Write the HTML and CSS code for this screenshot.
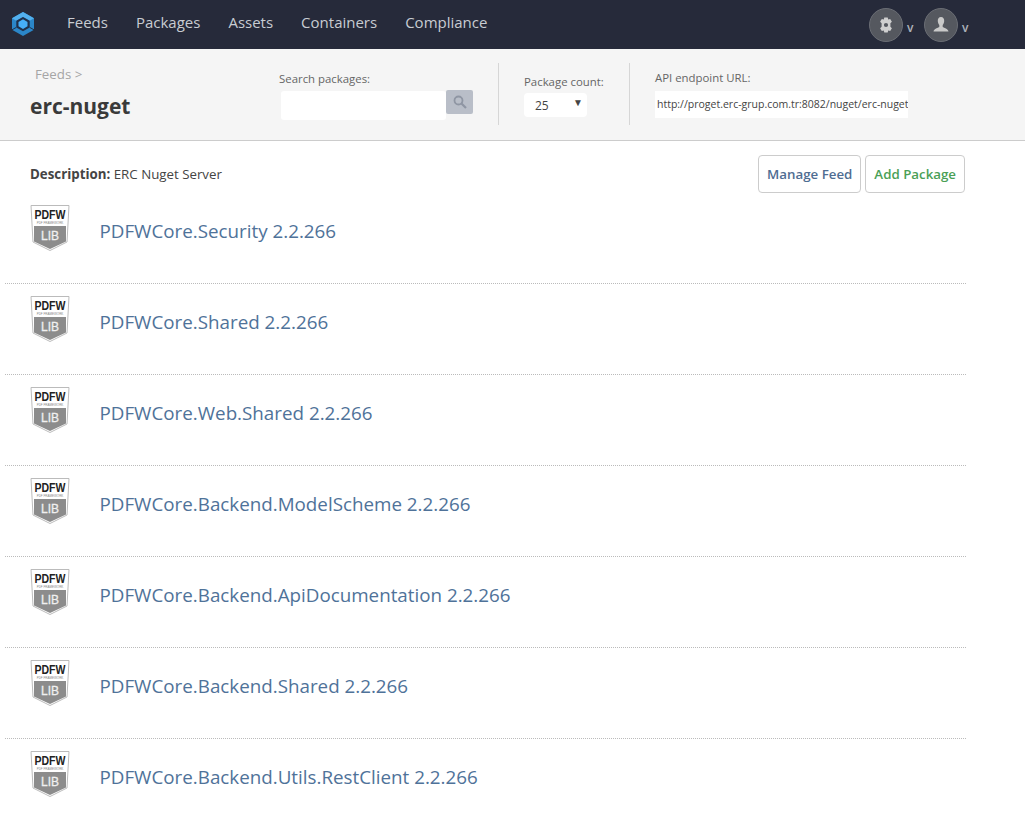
FILE: index.html
```html
<!DOCTYPE html>
<html lang="en">
<head>
    <meta charset="UTF-8">
    <title>erc-nuget</title>
    <link rel="stylesheet" href="styles.css">
</head>
<body>
    <nav class="navbar">
        <svg class="logo" width="24" height="26" viewBox="0 0 24 26">
            <path d="M12 1L23 7.200V18.800L12 25L1 18.800V7.200Z" fill="#2b86c8"/>
            <path d="M12 1L23 7.200L18.700 9.800L12 6L5.300 9.800L1 7.200Z" fill="#52b0ee"/>
            <path d="M12 6L18.700 9.800V16.400L12 20.300L5.300 16.400V9.800Z" fill="#20304a"/>
            <path d="M12 8.300L16.500 10.900V15.300L12 18L7.500 15.300V10.900Z" fill="#46aef7"/>
            <path d="M1 18.800L5.300 16.400M23 18.800L18.700 16.400" stroke="#20304a"/>
        </svg>
        <a class="nav-link" href="#">Feeds</a>
        <a class="nav-link" href="#">Packages</a>
        <a class="nav-link" href="#">Assets</a>
        <a class="nav-link" href="#">Containers</a>
        <a class="nav-link" href="#">Compliance</a>
        <div class="nav-right">
            <span class="circle-btn">
                <svg width="16" height="16" viewBox="0 0 16 16">
                    <path fill="#cfcfcf" fill-rule="evenodd" d="M6.300 0.500H9.700L10.200 2.500L12.200 1.900L13.900 4.800L12.400 6.300L12.400 9.700L13.900 11.200L12.200 14.100L10.200 13.500L9.700 15.500H6.300L5.800 13.500L3.800 14.100L2.100 11.200L3.600 9.700L3.600 6.300L2.100 4.800L3.800 1.900L5.800 2.500ZM8 5.900A2.100 2.100 0 1 0 8 10.100A2.100 2.100 0 1 0 8 5.900Z"/>
                </svg>
            </span>
            <span class="caret">v</span>
            <span class="circle-btn">
                <svg width="18" height="18" viewBox="0 0 18 18">
                    <path fill="#c9c9c9" d="M9 1C6.800 1 5.600 2.700 5.800 5C5.900 6.700 6.500 8 7.300 9V11C6 12 2 12.500 1.500 15.500H16.500C16 12.500 12 12 10.700 11V9C11.500 8 12.100 6.700 12.200 5C12.400 2.700 11.200 1 9 1Z"/>
                </svg>
            </span>
            <span class="caret">v</span>
        </div>
    </nav>

    <header class="feed-header">
        <div class="feed-title">
            <a class="crumb" href="#">Feeds &gt;</a>
            <h1>erc-nuget</h1>
        </div>
        <div class="search-block">
            <label>Search packages:</label>
            <div class="search-row">
                <input class="search-input" type="text">
                <span class="search-btn">
                    <svg width="14" height="14" viewBox="0 0 14 14">
                        <circle cx="5.500" cy="5.500" r="4" fill="none" stroke="#8f96a3" stroke-width="1.800"/>
                        <path d="M8.500 8.500L13 13" stroke="#8f96a3" stroke-width="2.200"/>
                    </svg>
                </span>
            </div>
        </div>
        <div class="count-block">
            <label>Package count:</label>
            <div class="count-select">25<span class="arrow">▼</span></div>
        </div>
        <div class="api-block">
            <label>API endpoint URL:</label>
            <div class="api-url">http://proget.erc-grup.com.tr:8082/nuget/erc-nuget</div>
        </div>
    </header>

    <main class="content">
        <div class="desc-row">
            <p class="description"><strong>Description:</strong> ERC Nuget Server</p>
            <div class="actions">
                <a class="btn btn-blue" href="#">Manage Feed</a>
                <a class="btn btn-green" href="#">Add Package</a>
            </div>
        </div>
        <ul class="packages">
            <li class="package">
                <svg class="pkg-icon" viewBox="0 0 40 46">
                    <path d="M1 0.500H39L37 37L20 45.500L3 37Z" fill="#fff" stroke="#bbb"/>
                    <path d="M4 21H36V36.500L20 44L4 36.500Z" fill="#8c8c8c"/>
                    <text x="20" y="14" class="lib-top" textLength="31" lengthAdjust="spacingAndGlyphs" text-anchor="middle">PDFW</text>
                    <text x="20" y="19" class="lib-small" text-anchor="middle">PDF FRAMEWORK</text>
                    <text x="20" y="35" class="lib-bottom" textLength="18" lengthAdjust="spacingAndGlyphs" text-anchor="middle">LIB</text>
                </svg>
                <a href="#">PDFWCore.Security 2.2.266</a>
            </li>
            <li class="package">
                <svg class="pkg-icon" viewBox="0 0 40 46">
                    <path d="M1 0.500H39L37 37L20 45.500L3 37Z" fill="#fff" stroke="#bbb"/>
                    <path d="M4 21H36V36.500L20 44L4 36.500Z" fill="#8c8c8c"/>
                    <text x="20" y="14" class="lib-top" textLength="31" lengthAdjust="spacingAndGlyphs" text-anchor="middle">PDFW</text>
                    <text x="20" y="19" class="lib-small" text-anchor="middle">PDF FRAMEWORK</text>
                    <text x="20" y="35" class="lib-bottom" textLength="18" lengthAdjust="spacingAndGlyphs" text-anchor="middle">LIB</text>
                </svg>
                <a href="#">PDFWCore.Shared 2.2.266</a>
            </li>
            <li class="package">
                <svg class="pkg-icon" viewBox="0 0 40 46">
                    <path d="M1 0.500H39L37 37L20 45.500L3 37Z" fill="#fff" stroke="#bbb"/>
                    <path d="M4 21H36V36.500L20 44L4 36.500Z" fill="#8c8c8c"/>
                    <text x="20" y="14" class="lib-top" textLength="31" lengthAdjust="spacingAndGlyphs" text-anchor="middle">PDFW</text>
                    <text x="20" y="19" class="lib-small" text-anchor="middle">PDF FRAMEWORK</text>
                    <text x="20" y="35" class="lib-bottom" textLength="18" lengthAdjust="spacingAndGlyphs" text-anchor="middle">LIB</text>
                </svg>
                <a href="#">PDFWCore.Web.Shared 2.2.266</a>
            </li>
            <li class="package">
                <svg class="pkg-icon" viewBox="0 0 40 46">
                    <path d="M1 0.500H39L37 37L20 45.500L3 37Z" fill="#fff" stroke="#bbb"/>
                    <path d="M4 21H36V36.500L20 44L4 36.500Z" fill="#8c8c8c"/>
                    <text x="20" y="14" class="lib-top" textLength="31" lengthAdjust="spacingAndGlyphs" text-anchor="middle">PDFW</text>
                    <text x="20" y="19" class="lib-small" text-anchor="middle">PDF FRAMEWORK</text>
                    <text x="20" y="35" class="lib-bottom" textLength="18" lengthAdjust="spacingAndGlyphs" text-anchor="middle">LIB</text>
                </svg>
                <a href="#">PDFWCore.Backend.ModelScheme 2.2.266</a>
            </li>
            <li class="package">
                <svg class="pkg-icon" viewBox="0 0 40 46">
                    <path d="M1 0.500H39L37 37L20 45.500L3 37Z" fill="#fff" stroke="#bbb"/>
                    <path d="M4 21H36V36.500L20 44L4 36.500Z" fill="#8c8c8c"/>
                    <text x="20" y="14" class="lib-top" textLength="31" lengthAdjust="spacingAndGlyphs" text-anchor="middle">PDFW</text>
                    <text x="20" y="19" class="lib-small" text-anchor="middle">PDF FRAMEWORK</text>
                    <text x="20" y="35" class="lib-bottom" textLength="18" lengthAdjust="spacingAndGlyphs" text-anchor="middle">LIB</text>
                </svg>
                <a href="#">PDFWCore.Backend.ApiDocumentation 2.2.266</a>
            </li>
            <li class="package">
                <svg class="pkg-icon" viewBox="0 0 40 46">
                    <path d="M1 0.500H39L37 37L20 45.500L3 37Z" fill="#fff" stroke="#bbb"/>
                    <path d="M4 21H36V36.500L20 44L4 36.500Z" fill="#8c8c8c"/>
                    <text x="20" y="14" class="lib-top" textLength="31" lengthAdjust="spacingAndGlyphs" text-anchor="middle">PDFW</text>
                    <text x="20" y="19" class="lib-small" text-anchor="middle">PDF FRAMEWORK</text>
                    <text x="20" y="35" class="lib-bottom" textLength="18" lengthAdjust="spacingAndGlyphs" text-anchor="middle">LIB</text>
                </svg>
                <a href="#">PDFWCore.Backend.Shared 2.2.266</a>
            </li>
            <li class="package">
                <svg class="pkg-icon" viewBox="0 0 40 46">
                    <path d="M1 0.500H39L37 37L20 45.500L3 37Z" fill="#fff" stroke="#bbb"/>
                    <path d="M4 21H36V36.500L20 44L4 36.500Z" fill="#8c8c8c"/>
                    <text x="20" y="14" class="lib-top" textLength="31" lengthAdjust="spacingAndGlyphs" text-anchor="middle">PDFW</text>
                    <text x="20" y="19" class="lib-small" text-anchor="middle">PDF FRAMEWORK</text>
                    <text x="20" y="35" class="lib-bottom" textLength="18" lengthAdjust="spacingAndGlyphs" text-anchor="middle">LIB</text>
                </svg>
                <a href="#">PDFWCore.Backend.Utils.RestClient 2.2.266</a>
            </li>
        </ul>
    </main>
</body>
</html>
```

FILE: styles.css
```css
html, body { height: 822px; overflow: hidden; }
body { font-family: "Open Sans", "Noto Sans", sans-serif; margin: 0; background: #fff; color: #333; }
a { text-decoration: none; }

.navbar { display: flex; align-items: center; height: 49px; background: #262a3a; padding-left: 11px; }
.logo { margin: 0 32px 2px 0; }
.nav-link { color: #c8ccd2; font-size: 15px; margin: 0 28px 6px 0; }
.nav-right { display: flex; align-items: center; margin-left: auto; padding-right: 55px; }
.circle-btn { display: flex; align-items: center; justify-content: center; width: 32px; height: 32px; border-radius: 50%; background: #55585f; border: 1px solid #6a6d74; }
.caret { color: #aeb2ba; font-size: 12px; font-weight: 600; margin: 6px 9px 0 4px; width: 8px; }
.caret:last-child { margin-right: 0; }

.feed-header { display: flex; height: 92px; box-sizing: border-box; background: #f5f5f5; border-bottom: 1px solid #ccc; }
.feed-title { width: 279px; padding-left: 30px; box-sizing: border-box; }
.crumb { display: block; color: #a5a5a5; font-size: 13.300px; margin: 16px 0 0 5px; line-height: 18px; }
h1 { margin: 9px 0 0; font-size: 21px; line-height: 29px; color: #3a3a3a; }
label { display: block; color: #666; font-size: 11.400px; line-height: 16px; }

.search-block { width: 220px; margin-top: 14px; padding-top: 8px; height: 62px; border-right: 1px solid #d6d6d6; box-sizing: border-box; }
.search-row { display: flex; align-items: flex-start; margin: 4px 0 0 2px; }
.search-input { width: 165px; height: 29px; padding: 0; border: 0; border-radius: 3px; background: #fff; box-sizing: border-box; }
.search-btn { display: flex; align-items: center; justify-content: center; width: 27px; height: 24px; margin-top: -1px; background: #b9bec8; border-radius: 2px; }

.count-block { width: 131px; height: 62px; margin-top: 14px; padding: 11px 0 0 25px; border-right: 1px solid #d6d6d6; box-sizing: border-box; }
.count-select { position: relative; width: 63px; height: 24px; margin-top: 3px; padding-left: 11px; box-sizing: border-box; background: #fff; border-radius: 4px; font-size: 12px; line-height: 25px; color: #444; }
.arrow { position: absolute; right: 4px; top: -3px; font-size: 10px; color: #444; }

.api-block { margin-top: 14px; padding: 7px 0 0 25px; }
.api-url { width: 253px; height: 27px; margin-top: 5px; padding-left: 2px; box-sizing: border-box; background: #fff; font-size: 10.500px; line-height: 27px; color: #444; white-space: nowrap; overflow: hidden; }

.content { width: 961px; margin-left: 5px; }
.desc-row { display: flex; justify-content: space-between; height: 64px; box-sizing: border-box; padding: 14px 0 0 25px; }
.description { margin: 10px 0 0; font-size: 13.300px; line-height: 18px; color: #444; }
.actions { display: flex; gap: 4px; margin-right: 1px; }
.btn { height: 38px; box-sizing: border-box; padding: 0 8px; border: 1px solid #ccc; border-radius: 4px; background: #fff; font-size: 13.300px; font-weight: 600; line-height: 36px; }
.btn-blue { color: #4f6d92; }
.btn-green { color: #4a9f56; }

.packages { list-style: none; margin: 0; padding: 0; }
.package { display: flex; height: 91px; box-sizing: border-box; padding-left: 25px; border-bottom: 1px dotted #bbb; }
.package:first-child { height: 79px; }
.package:last-child { border-bottom: 0; }
.pkg-icon { width: 40px; height: 46px; }
.package a { margin: 12px 0 0 29.500px; font-size: 18.800px; line-height: 28px; color: #4f7299; height: 28px; }
.package + .package .pkg-icon { margin-top: 12px; }
.package + .package a { margin-top: 24px; }

.lib-top { font: 700 12.500px "Liberation Sans", sans-serif; fill: #222; }
.lib-small { font: 3px "Liberation Sans", sans-serif; fill: #888; }
.lib-bottom { font: 400 13px "Liberation Sans", sans-serif; fill: #f0f0f0; stroke: #f0f0f0; stroke-width: 0.300px; }
```
